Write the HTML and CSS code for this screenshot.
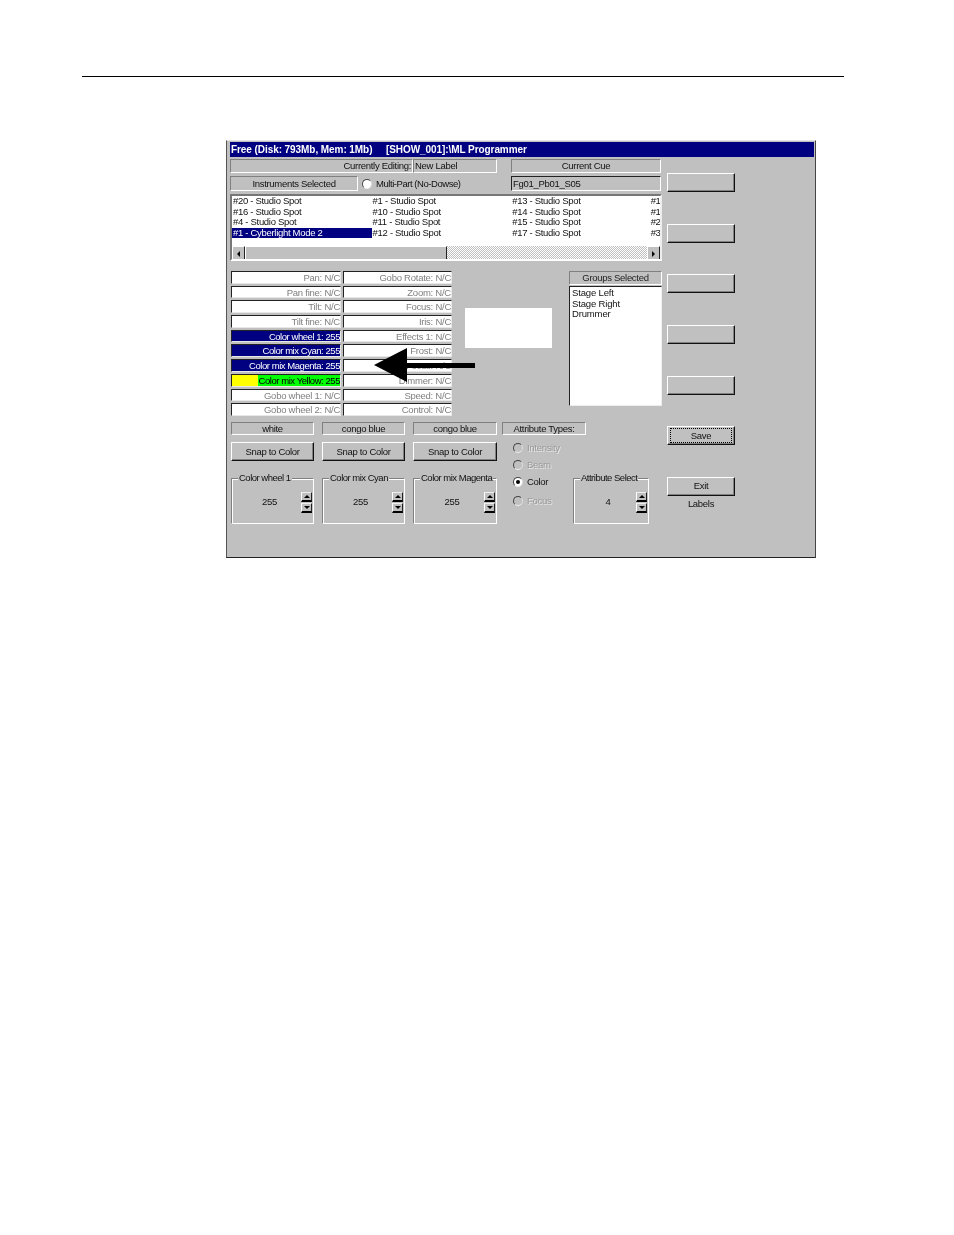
FILE: index.html
```html
<!DOCTYPE html>
<html lang="en">
<head>
<meta charset="utf-8">
<title>ML Programmer</title>
<link rel="stylesheet" href="styles.css">
</head>
<body>
<div class="rule"></div>
<div class="window">
  <div class="titlebar">Free (Disk: 793Mb, Mem: 1Mb)&nbsp;&nbsp;&nbsp;&nbsp;&nbsp;[SHOW_001]:\ML Programmer</div>
  <div class="client">
    <div class="main">
      <div class="row row-a">
        <div class="editing">
          <div class="etched label-editing">Currently Editing:</div>
          <div class="etched label-name">New Label</div>
        </div>
        <div class="etched cue">Current Cue</div>
      </div>
      <div class="row row-b">
        <div class="etched selected">Instruments Selected</div>
        <div class="multipart"><span class="radio"></span><span>Multi-Part (No-Dowse)</span></div>
        <div class="sunken-flat cue-name">Fg01_Pb01_S05</div>
      </div>
      <div class="listbox">
        <div class="list-grid">
          <div class="list-item">#20 - Studio Spot</div><div class="list-item">#1 - Studio Spot</div><div class="list-item">#13 - Studio Spot</div><div class="list-item">#1</div>
          <div class="list-item">#16 - Studio Spot</div><div class="list-item">#10 - Studio Spot</div><div class="list-item">#14 - Studio Spot</div><div class="list-item">#1</div>
          <div class="list-item">#4 - Studio Spot</div><div class="list-item">#11 - Studio Spot</div><div class="list-item">#15 - Studio Spot</div><div class="list-item">#2</div>
          <div class="list-item is-selected">#1 - Cyberlight Mode 2</div><div class="list-item">#12 - Studio Spot</div><div class="list-item">#17 - Studio Spot</div><div class="list-item">#3</div>
        </div>
        <div class="scrollbar">
          <div class="scroll-btn"><span class="tri tri-left"></span></div>
          <div class="scroll-thumb"></div>
          <div class="scroll-track"></div>
          <div class="scroll-btn"><span class="tri tri-right"></span></div>
        </div>
      </div>
      <div class="mid">
        <div class="attrs">
          <div class="attr">Pan: N/C</div><div class="attr">Gobo Rotate: N/C</div>
          <div class="attr">Pan fine: N/C</div><div class="attr">Zoom: N/C</div>
          <div class="attr">Tilt: N/C</div><div class="attr">Focus: N/C</div>
          <div class="attr">Tilt fine: N/C</div><div class="attr">Iris: N/C</div>
          <div class="attr is-active">Color wheel 1: 255</div><div class="attr">Effects 1: N/C</div>
          <div class="attr is-active">Color mix Cyan: 255</div><div class="attr">Frost: N/C</div>
          <div class="attr is-active">Color mix Magenta: 255</div><div class="attr">Focus: N/C</div>
          <div class="attr is-yellow">Color mix Yellow: 255</div><div class="attr">Dimmer: N/C</div>
          <div class="attr">Gobo wheel 1: N/C</div><div class="attr">Speed: N/C</div>
          <div class="attr">Gobo wheel 2: N/C</div><div class="attr">Control: N/C</div>
        </div>
        <div class="whitebox"></div>
        <div class="groups">
          <div class="etched groups-head">Groups Selected</div>
          <div class="groups-list">
            <div>Stage Left</div>
            <div>Stage Right</div>
            <div>Drummer</div>
          </div>
        </div>
      </div>
      <div class="bottom">
        <div class="color-col">
          <div class="etched swatch">white</div>
          <div class="btn snap">Snap to Color</div>
          <div class="groupbox">
            <div class="legend">Color wheel 1</div>
            <div class="value">255</div>
            <div class="spinner"><div class="spin"><span class="tri tri-up"></span></div><div class="spin"><span class="tri tri-down"></span></div></div>
          </div>
        </div>
        <div class="color-col">
          <div class="etched swatch">congo blue</div>
          <div class="btn snap">Snap to Color</div>
          <div class="groupbox">
            <div class="legend">Color mix Cyan</div>
            <div class="value">255</div>
            <div class="spinner"><div class="spin"><span class="tri tri-up"></span></div><div class="spin"><span class="tri tri-down"></span></div></div>
          </div>
        </div>
        <div class="color-col">
          <div class="etched swatch">congo blue</div>
          <div class="btn snap">Snap to Color</div>
          <div class="groupbox">
            <div class="legend">Color mix Magenta</div>
            <div class="value">255</div>
            <div class="spinner"><div class="spin"><span class="tri tri-up"></span></div><div class="spin"><span class="tri tri-down"></span></div></div>
          </div>
        </div>
        <div class="attr-panel">
          <div class="etched attr-types">Attribute Types:</div>
          <div class="attr-panel-row">
            <div class="radios">
              <div class="radio-row is-disabled"><span class="radio"></span><span>Intensity</span></div>
              <div class="radio-row is-disabled"><span class="radio"></span><span>Beam</span></div>
              <div class="radio-row"><span class="radio is-on"></span><span>Color</span></div>
              <div class="radio-row is-disabled"><span class="radio"></span><span>Focus</span></div>
            </div>
            <div class="groupbox select-box">
              <div class="legend">Attribute Select</div>
              <div class="value">4</div>
              <div class="spinner"><div class="spin"><span class="tri tri-up"></span></div><div class="spin"><span class="tri tri-down"></span></div></div>
            </div>
          </div>
        </div>
      </div>
    </div>
    <div class="side">
      <div class="btn side-btn"></div>
      <div class="btn side-btn"></div>
      <div class="btn side-btn"></div>
      <div class="btn side-btn"></div>
      <div class="btn side-btn"></div>
      <div class="btn side-btn is-focus"><span class="focus-ring">Save</span></div>
      <div class="btn side-btn">Exit</div>
      <div class="labels">Labels</div>
    </div>
  </div>
  <svg class="arrow" width="102" height="34" viewBox="0 0 102 34" aria-hidden="true"><path d="M0 17 L33 0 V15 H101 V20 H33 V34 Z" fill="#000"/></svg>
</div>
</body>
</html>
```
FILE: styles.css
```css
html, body { margin: 0; padding: 0; background: #fff; }
body { height: 1235px; overflow: hidden; }
.rule { height: 1px; margin: 76px 110px 0 82px; background: #000; }
.window {
  position: relative;
  box-sizing: border-box;
  width: 590px;
  height: 418px;
  margin: 63px 0 0 226px;
  padding: 1px 2px 0 3px;
  background: #c0c0c0;
  border-top: 1px solid #e4e4e4;
  border-left: 1px solid #555;
  border-right: 1px solid #444;
  border-bottom: 1px solid #222;
  font: 9.5px/12px "Liberation Sans", Arial, sans-serif;
  letter-spacing: -0.3px;
  color: #111;
  filter: blur(0.25px);
}
.titlebar {
  height: 15px;
  margin-right: -1px;
  padding-left: 1px;
  background: #000080;
  color: #fff;
  font-weight: 700;
  font-size: 10px;
  line-height: 15px;
  letter-spacing: -0.07px;
  white-space: pre;
}
.client { display: flex; gap: 5px; }
.main { width: 432px; flex: none; }
.etched {
  box-sizing: border-box;
  display: flex;
  align-items: center;
  justify-content: center;
  border: 1px solid;
  border-color: #808080 #fff #fff #808080;
  white-space: nowrap;
}
.row { display: flex; }
.row-a { margin-top: 2px; height: 14px; }
.editing { display: flex; width: 267px; }
.label-editing { width: 183px; justify-content: flex-end; padding-right: 1px; }
.label-name { flex: 1; justify-content: flex-start; padding-left: 1px; }
.cue { margin-left: 14px; width: 150px; }
.row-b { margin-top: 3px; height: 15px; align-items: stretch; }
.selected { width: 128px; }
.multipart { width: 153px; display: flex; align-items: center; gap: 4px; padding-left: 4px; box-sizing: border-box; white-space: nowrap; letter-spacing: -0.45px; }
.sunken-flat {
  box-sizing: border-box;
  width: 150px;
  padding-left: 1px;
  border: 1px solid;
  border-color: #222 #fff #fff #222;
  line-height: 13px;
}
.radio {
  box-sizing: border-box;
  display: inline-block;
  flex: none;
  position: relative;
  width: 10px;
  height: 10px;
  border-radius: 50%;
  background: #fff;
  border: 1px solid;
  border-color: #444 #ddd #eee #444;
}
.radio.is-on::after {
  content: "";
  position: absolute;
  left: 2px;
  top: 2px;
  width: 4px;
  height: 4px;
  border-radius: 50%;
  background: #000;
}
.is-disabled .radio { background: #c0c0c0; }
.listbox {
  box-sizing: border-box;
  width: 432px;
  height: 67px;
  margin-top: 3px;
  background: #fff;
  border: 2px solid;
  border-color: #777 #eee #fff #777;
  overflow: hidden;
}
.list-grid {
  display: grid;
  grid-template-columns: repeat(3, 139.6px) 9.2px;
  grid-auto-rows: 10.5px;
  height: 50px;
  overflow: hidden;
  box-sizing: border-box;
  width: 428px;
}
.list-item { padding-left: 1px; line-height: 10.5px; white-space: nowrap; letter-spacing: -0.3px; }
.list-item:nth-child(4n) { padding-left: 0; letter-spacing: -0.6px; }
.list-item.is-selected { background: #000080; color: #fff; }
.scrollbar { display: flex; height: 15px; }
.scroll-btn, .spin {
  box-sizing: border-box;
  display: flex;
  align-items: center;
  justify-content: center;
  background: #c0c0c0;
  border: 1px solid;
  border-color: #fff #222 #222 #fff;
}
.scroll-btn { width: 13px; flex: none; }
.scroll-thumb {
  box-sizing: border-box;
  width: 202px;
  flex: none;
  background: #c0c0c0;
  border: 1px solid;
  border-color: #fff #222 #222 #fff;
}
.scroll-track { flex: 1; background: repeating-conic-gradient(#fff 0 25%, #c0c0c0 0 50%) 0 0 / 2px 2px; }
.tri { width: 0; height: 0; display: block; }
.tri-left { border: 3px solid transparent; border-left: 0; border-right: 3px solid #000; }
.tri-right { border: 3px solid transparent; border-right: 0; border-left: 3px solid #000; }
.tri-up { border: 3px solid transparent; border-top: 0; border-bottom: 3px solid #000; }
.tri-down { border: 3px solid transparent; border-bottom: 0; border-top: 3px solid #000; }
.mid { display: flex; margin-top: 10px; height: 145px; }
.attrs {
  display: grid;
  grid-template-columns: 110px 109px;
  grid-template-rows: repeat(10, 1fr);
  column-gap: 2px;
  row-gap: 2px;
  width: 221px;
  margin-left: 1px;
  flex: none;
}
.attr {
  box-sizing: border-box;
  background: #fff;
  border: 1px solid;
  border-color: #222 #e8e8e8 #e8e8e8 #222;
  text-align: right;
  color: #808080;
  line-height: 11px;
  white-space: nowrap;
  overflow: hidden;
  letter-spacing: -0.25px;
}
.attr.is-active { background: #000080; color: #fff; letter-spacing: -0.45px; }
.attr.is-yellow { background: linear-gradient(90deg, #ffff00 0 26px, #00ff00 26px); color: #000; letter-spacing: -0.45px; }
.whitebox { width: 87px; height: 40px; margin: 37px 0 0 13px; background: #fff; flex: none; }
.groups { margin-left: 17px; width: 93px; flex: none; }
.groups-head { height: 14px; width: 93px; color: #222; }
.groups-list {
  box-sizing: border-box;
  height: 120px;
  margin-top: 1px;
  padding: 1px 0 0 2px;
  background: #fff;
  border: 1px solid;
  border-color: #222 #eee #eee #222;
  line-height: 10.5px;
  letter-spacing: -0.15px;
}
.bottom { display: flex; margin-top: 6px; margin-left: 1px; }
.color-col { width: 83px; margin-right: 8px; flex: none; }
.color-col:nth-child(3) { width: 84px; margin-right: 5px; }
.swatch { height: 13px; }
.btn {
  box-sizing: border-box;
  display: flex;
  align-items: center;
  justify-content: center;
  background: #c0c0c0;
  border: 1px solid;
  border-color: #fff #111 #111 #fff;
  box-shadow: inset -1px -1px 0 #808080;
  white-space: nowrap;
}
.snap { height: 19px; margin-top: 7px; }
.groupbox {
  position: relative;
  box-sizing: border-box;
  display: flex;
  align-items: center;
  height: 46px;
  margin-top: 17px;
  border: 1px solid;
  border-color: #808080 #fff #fff #808080;
  box-shadow: 1px 1px 0 #fff inset;
}
.legend {
  position: absolute;
  left: 6px;
  top: -7px;
  padding: 0 1px;
  background: #c0c0c0;
  white-space: nowrap;
  line-height: 12px;
  letter-spacing: -0.5px;
}
.value { flex: 1; text-align: center; padding-top: 1px; padding-left: 6px; }
.spinner { display: flex; flex-direction: column; gap: 1px; margin-right: 1px; margin-top: 2px; }
.spin { width: 11px; height: 10px; border-bottom-color: #000; border-bottom-width: 2px; border-top-color: #eee; }
.attr-panel { width: 148px; margin-left: 0; flex: none; }
.attr-types { width: 84px; height: 13px; }
.attr-panel-row { display: flex; }
.radios { width: 71px; padding: 4px 0 0 11px; box-sizing: border-box; flex: none; }
.radio-row { display: flex; align-items: center; gap: 4px; height: 17px; }
.radio-row:last-child { margin-top: 2px; }
.radio-row.is-disabled { color: #9a9a9a; text-shadow: 1px 1px 0 #e8e8e8; }
.select-box { width: 76px; margin-top: 43px; }
.side { display: flex; flex-direction: column; gap: 31.67px; width: 68px; padding-top: 16px; }
.side-btn { height: 19px; padding-bottom: 1px; }
.focus-ring {
  box-sizing: border-box;
  width: 62px;
  height: 15px;
  line-height: 13px;
  text-align: center;
  border: 1px dotted #000;
}
.labels { margin-top: -29.67px; text-align: center; }
.arrow { position: absolute; left: 147px; top: 207px; }
```
